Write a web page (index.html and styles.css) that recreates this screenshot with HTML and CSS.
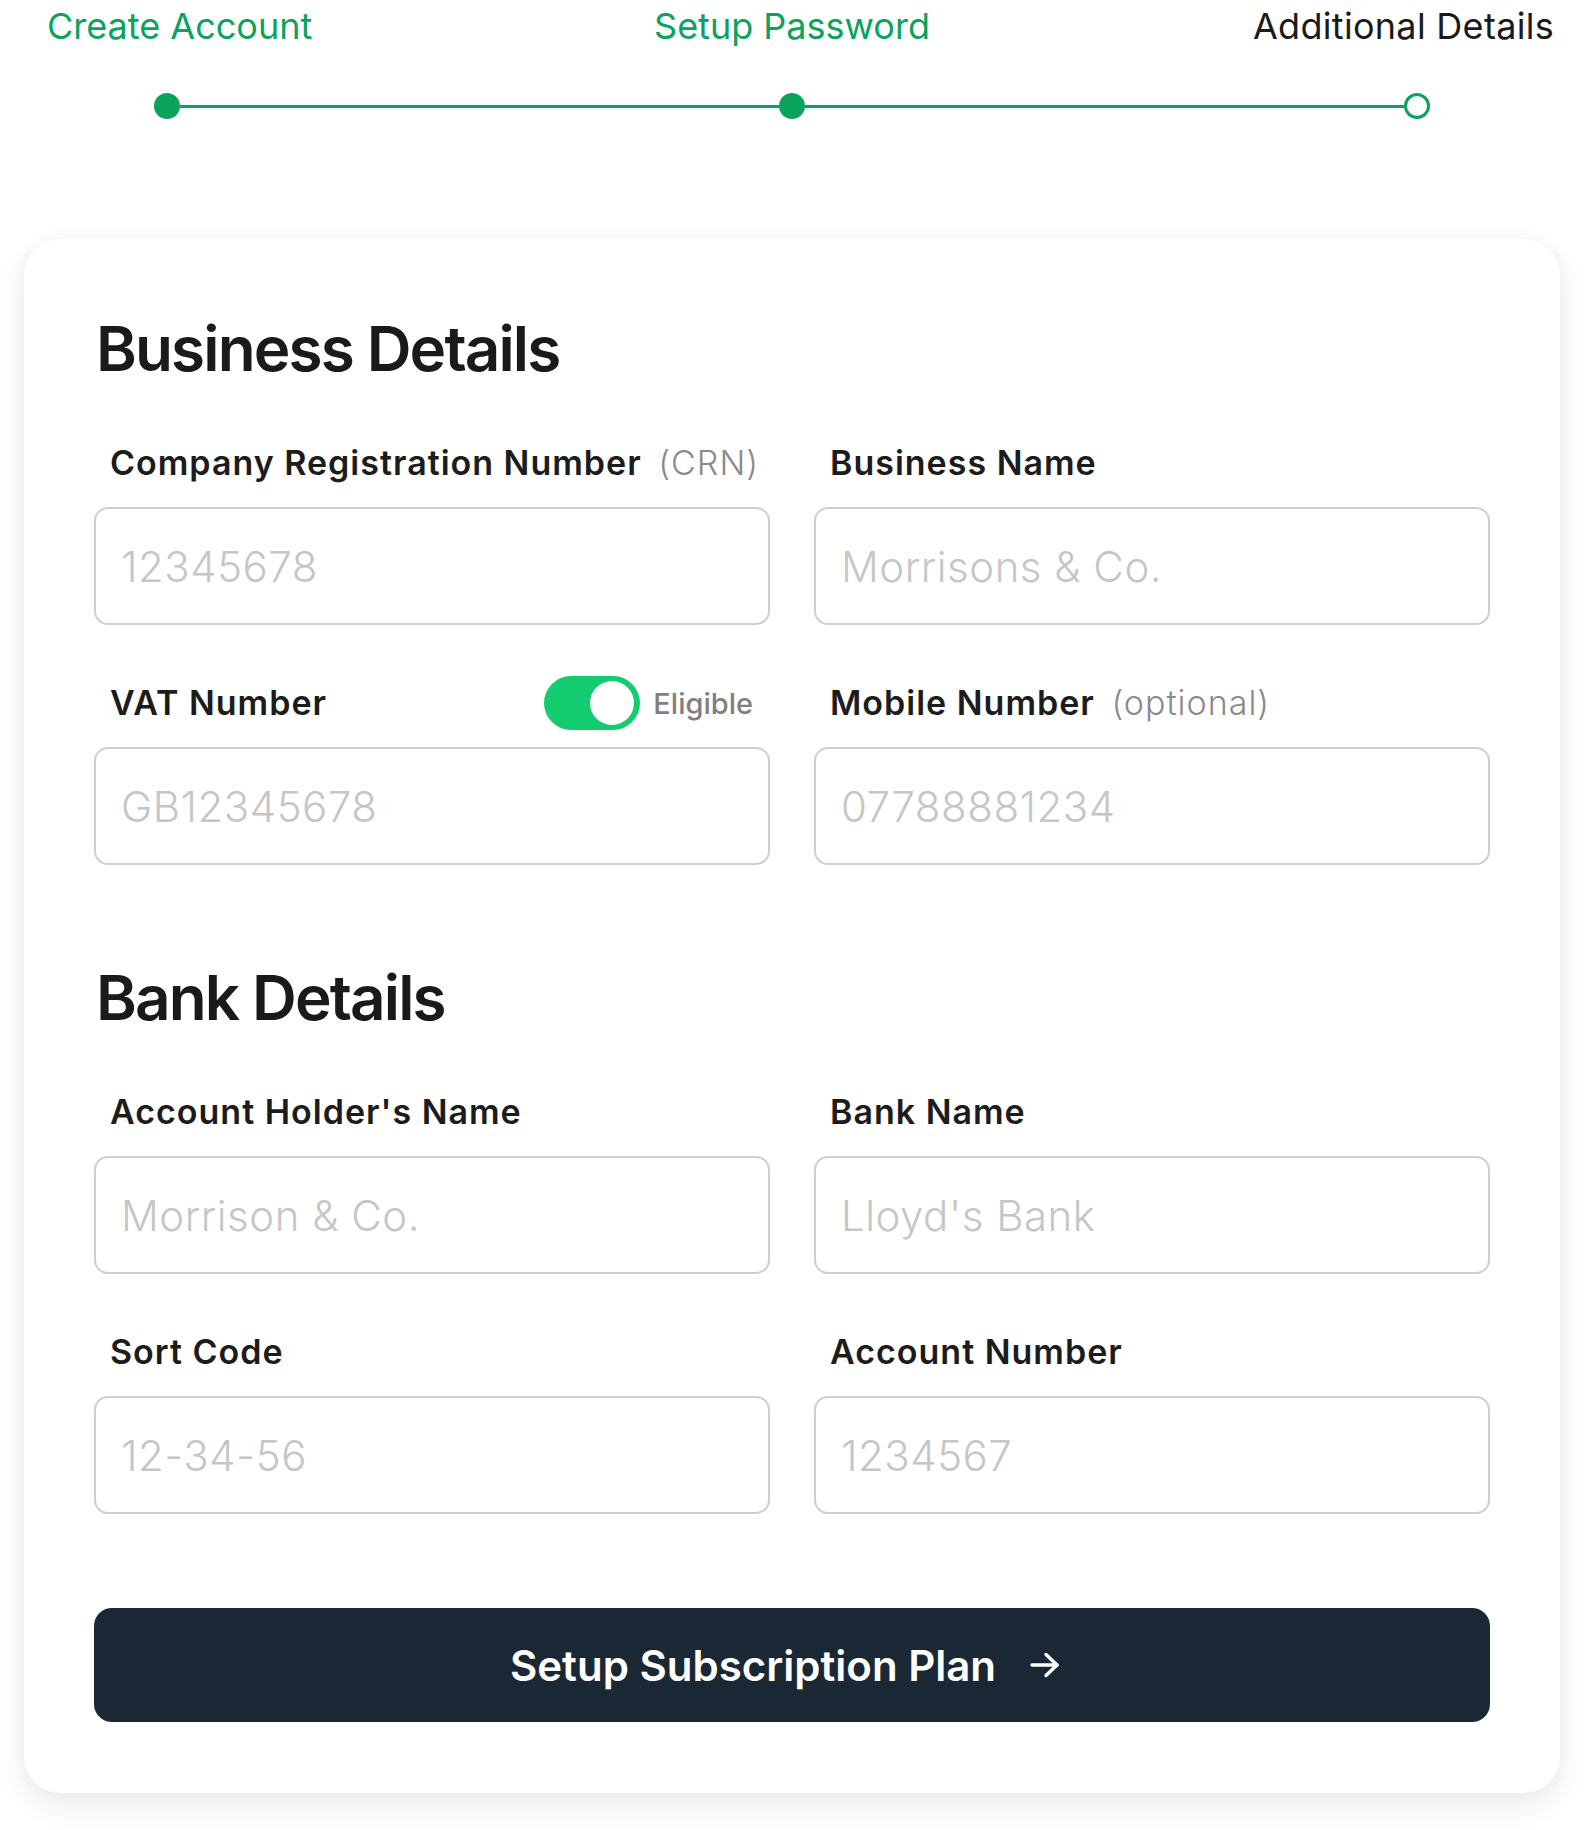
FILE: index.html
```html
<!DOCTYPE html>
<html lang="en">
<head>
<meta charset="utf-8">
<title>Additional Details</title>
<link rel="stylesheet" href="styles.css">
</head>
<body>
<header class="steps">
  <div class="step-labels">
    <span class="step-label done first">Create Account</span>
    <span class="step-label done mid">Setup Password</span>
    <span class="step-label current last">Additional Details</span>
  </div>
  <div class="progress">
    <span class="dot filled"></span>
    <span class="bar"></span>
    <span class="dot filled"></span>
    <span class="bar"></span>
    <span class="dot hollow"></span>
  </div>
</header>

<main class="card">
  <h2 class="section-title">Business Details</h2>
  <div class="field-grid">
    <div class="field">
      <div class="field-head"><label class="field-label">Company Registration Number <span class="hint">(CRN)</span></label></div>
      <input class="field-input" type="text" placeholder="12345678">
    </div>
    <div class="field">
      <div class="field-head"><label class="field-label">Business Name</label></div>
      <input class="field-input" type="text" placeholder="Morrisons &amp; Co.">
    </div>
    <div class="field">
      <div class="field-head">
        <label class="field-label">VAT Number</label>
        <div class="toggle-wrap">
          <span class="toggle"><span class="knob"></span></span>
          <span class="toggle-text">Eligible</span>
        </div>
      </div>
      <input class="field-input" type="text" placeholder="GB12345678">
    </div>
    <div class="field">
      <div class="field-head"><label class="field-label">Mobile Number <span class="hint">(optional)</span></label></div>
      <input class="field-input" type="text" placeholder="07788881234">
    </div>
  </div>

  <h2 class="section-title section-gap">Bank Details</h2>
  <div class="field-grid">
    <div class="field">
      <div class="field-head"><label class="field-label">Account Holder's Name</label></div>
      <input class="field-input" type="text" placeholder="Morrison &amp; Co.">
    </div>
    <div class="field">
      <div class="field-head"><label class="field-label">Bank Name</label></div>
      <input class="field-input" type="text" placeholder="Lloyd's Bank">
    </div>
    <div class="field">
      <div class="field-head"><label class="field-label">Sort Code</label></div>
      <input class="field-input" type="text" placeholder="12-34-56">
    </div>
    <div class="field">
      <div class="field-head"><label class="field-label">Account Number</label></div>
      <input class="field-input" type="text" placeholder="1234567">
    </div>
  </div>

  <button class="primary-btn" type="button">
    <span>Setup Subscription Plan</span>
    <svg class="arrow" width="30" height="26" viewBox="0 0 30 26" fill="none" stroke="#ffffff" stroke-width="3.4" stroke-linecap="round" stroke-linejoin="round">
      <path d="M2 13 H27"/>
      <path d="M16 2.5 L27 13 L16 23.5"/>
    </svg>
  </button>
</main>
</body>
</html>
```

FILE: styles.css
```css
* { box-sizing: border-box; }

html, body {
  margin: 0;
  padding: 0;
  background: #ffffff;
}

body {
  font-family: Inter, "Noto Sans", "Liberation Sans", sans-serif;
  color: #1a1a1a;
}

/* ---------- steps ---------- */
.steps {
  padding-top: 4px;
}

.step-labels {
  display: grid;
  grid-template-columns: 1fr 1fr 1fr;
  align-items: start;
}

.step-label {
  font-size: 36px;
  line-height: 44px;
  font-weight: 400;
  white-space: nowrap;
}

.step-label.done { color: #0ba35b; }
.step-label.current { color: #1a1a1a; letter-spacing: 0.3px; }
.step-label.first { justify-self: start; padding-left: 47px; }
.step-label.mid { justify-self: center; }
.step-label.last { justify-self: end; padding-right: 30px; }

.progress {
  display: flex;
  align-items: center;
  width: 1276px;
  margin: 45px auto 0;
}

.dot {
  width: 26px;
  height: 26px;
  border-radius: 50%;
  flex: none;
}

.dot.filled { background: #0ba35b; }
.dot.hollow { background: #ffffff; border: 3px solid #0ba35b; }

.bar {
  flex: 1;
  height: 3px;
  background: #0ba35b;
}

/* ---------- card ---------- */
.card {
  margin: 120px 24px 40px;
  padding: 72px 70px 71px;
  background: #ffffff;
  border-radius: 36px;
  box-shadow: 0 12px 30px rgba(0, 0, 0, 0.08), 0 0 14px rgba(0, 0, 0, 0.04);
}

.section-title {
  margin: 0;
  padding-left: 2px;
  font-size: 62px;
  line-height: 76px;
  font-weight: 600;
  letter-spacing: -0.03em;
  color: #1a1a1a;
}

.section-gap { margin-top: 95px; }

.field-grid {
  display: grid;
  grid-template-columns: minmax(0, 1fr) minmax(0, 1fr);
  column-gap: 44px;
  row-gap: 51px;
  margin-top: 49px;
}

.field {
  display: flex;
  flex-direction: column;
  min-width: 0;
}

.field-head {
  display: flex;
  align-items: center;
  justify-content: space-between;
  min-height: 54px;
  padding: 0 17px 0 16px;
  margin-bottom: 17px;
}

.field-label {
  font-size: 34px;
  line-height: 40px;
  font-weight: 600;
  letter-spacing: 1px;
  color: #1c1c1c;
  white-space: nowrap;
}

.hint {
  font-weight: 300;
  color: #8a8a8a;
  margin-left: 7px;
}

.toggle-wrap {
  display: flex;
  align-items: center;
  gap: 13px;
}

.toggle {
  position: relative;
  width: 96px;
  height: 54px;
  border-radius: 27px;
  background: #14cb70;
}

.knob {
  position: absolute;
  top: 5px;
  right: 6px;
  width: 44px;
  height: 44px;
  border-radius: 50%;
  background: #ffffff;
}

.toggle-text {
  font-size: 29px;
  font-weight: 500;
  color: #7f7f7f;
}

.field-input {
  display: block;
  width: 100%;
  height: 118px;
  padding: 0 25px;
  border: 2px solid #cfcfcf;
  border-radius: 14px;
  background: #ffffff;
  font-family: Inter, "Noto Sans", "Liberation Sans", sans-serif;
  font-size: 42px;
  font-weight: 300;
  letter-spacing: 0.5px;
  color: #1a1a1a;
  outline: none;
}

.field-input::placeholder {
  color: #c6c6c6;
  font-weight: 300;
}

/* ---------- button ---------- */
.primary-btn {
  display: flex;
  align-items: center;
  justify-content: center;
  gap: 34px;
  width: 100%;
  height: 114px;
  margin-top: 94px;
  padding: 0 14px 0 0;
  border: none;
  border-radius: 18px;
  background: #1a2836;
  color: #ffffff;
  font-family: Inter, "Noto Sans", "Liberation Sans", sans-serif;
  font-size: 42px;
  font-weight: 600;
  cursor: pointer;
}

.arrow { flex: none; }
```
